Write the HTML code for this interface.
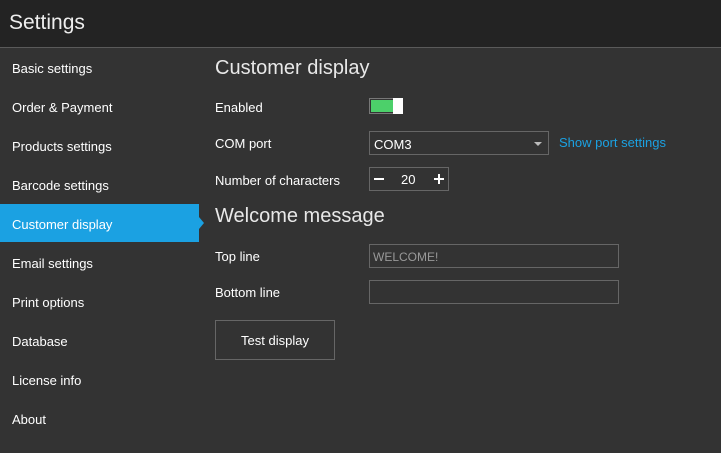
<!DOCTYPE html><html><head><style>
body{margin:0;width:721px;height:453px;background:#333;font-family:"Segoe UI","Liberation Sans",sans-serif;color:#fff;position:relative;overflow:hidden}
.a{position:absolute;white-space:nowrap}
.hdr{left:0;top:0;width:721px;height:47px;background:#232323;border-bottom:1px solid #5a5a5a}
.nav{font-size:13px;left:12px}
.lbl{font-size:13px;left:215px}
.box{border:1px solid #666;box-sizing:border-box}
.h{font-size:20px;color:#e8e8e8;font-weight:300}
</style></head><body>
<div class="a hdr"></div>
<div class="a" style="left:9px;top:11px;font-size:21px;color:#eee">Settings</div>
<div class="a" style="left:0;top:204px;width:199px;height:38px;background:#1ba1e2"></div>
<div class="a" style="left:199px;top:217px;width:0;height:0;border-top:6px solid transparent;border-bottom:6px solid transparent;border-left:5px solid #1ba1e2"></div>
<div class="a nav" style="top:61px">Basic settings</div>
<div class="a nav" style="top:100px">Order &amp; Payment</div>
<div class="a nav" style="top:139px">Products settings</div>
<div class="a nav" style="top:178px">Barcode settings</div>
<div class="a nav" style="top:217px">Customer display</div>
<div class="a nav" style="top:256px">Email settings</div>
<div class="a nav" style="top:295px">Print options</div>
<div class="a nav" style="top:334px">Database</div>
<div class="a nav" style="top:373px">License info</div>
<div class="a nav" style="top:412px">About</div>
<div class="a h" style="left:215px;top:57px">Customer display</div>
<div class="a lbl" style="top:100px">Enabled</div>
<div class="a box" style="left:369px;top:98px;width:34px;height:16px;border-color:#777"></div>
<div class="a" style="left:371px;top:100px;width:22px;height:12px;background:#4cd06a"></div>
<div class="a" style="left:393px;top:98px;width:10px;height:16px;background:#fff"></div>
<div class="a lbl" style="top:136px">COM port</div>
<div class="a box" style="left:369px;top:131px;width:180px;height:24px"></div>
<div class="a" style="left:374px;top:137px;font-size:13px">COM3</div>
<div class="a" style="left:534px;top:142px;width:0;height:0;border-left:4px solid transparent;border-right:4px solid transparent;border-top:4px solid #bbb"></div>
<div class="a" style="left:559px;top:135px;font-size:13px;color:#1ba1e2">Show port settings</div>
<div class="a lbl" style="top:173px">Number of characters</div>
<div class="a box" style="left:369px;top:167px;width:80px;height:24px"></div>
<div class="a" style="left:374px;top:178px;width:10px;height:2px;background:#fff"></div>
<div class="a" style="left:401px;top:172px;font-size:13px">20</div>
<div class="a" style="left:434px;top:178px;width:10px;height:2px;background:#fff"></div>
<div class="a" style="left:438px;top:174px;width:2px;height:10px;background:#fff"></div>
<div class="a h" style="left:215px;top:205px">Welcome message</div>
<div class="a lbl" style="top:249px">Top line</div>
<div class="a box" style="left:369px;top:244px;width:250px;height:24px"></div>
<div class="a" style="left:373px;top:250px;font-size:12px;color:#999">WELCOME!</div>
<div class="a lbl" style="top:285px">Bottom line</div>
<div class="a box" style="left:369px;top:280px;width:250px;height:24px"></div>
<div class="a box" style="left:215px;top:320px;width:120px;height:40px"></div>
<div class="a" style="left:215px;top:333px;width:120px;text-align:center;font-size:13px">Test display</div>
</body></html>
